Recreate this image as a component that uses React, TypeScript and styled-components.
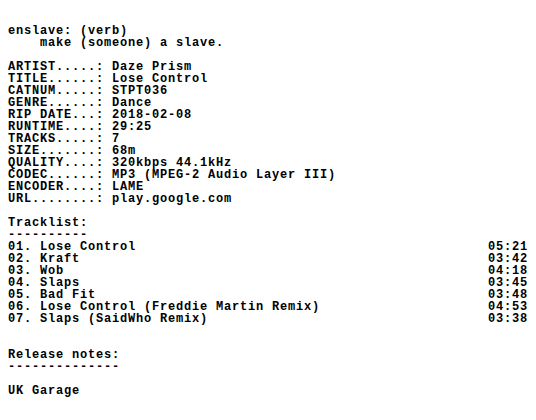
import React from "react";
import styled, { createGlobalStyle } from "styled-components";

const Global = createGlobalStyle`
  html, body { margin: 0; padding: 0; background: #ffffff; }
  body {
    color: #000000;
    font-family: "Liberation Mono", "DejaVu Sans Mono", monospace;
    font-weight: 700;
    font-size: 12px;
    letter-spacing: 0.8px;
    line-height: 12px;
  }
`;

const Page = styled.main`
  display: flex;
  flex-direction: column;
  padding: 25px 8px 0 8px;
  width: 536px;
  box-sizing: border-box;
`;

const Line = styled.div<{ $indent?: number }>`
  height: 12px;
  white-space: pre;
  padding-left: ${(p) => (p.$indent ?? 0) * 8}px;
`;

const Spacer = styled.div<{ $rows: number }>`
  height: ${(p) => p.$rows * 12}px;
`;

const InfoList = styled.dl`
  display: grid;
  grid-template-columns: 104px 1fr;
  grid-auto-rows: 12px;
  margin: 0;
`;

const Label = styled.dt`
  white-space: pre;
  margin: 0;
`;

const Value = styled.dd`
  white-space: pre;
  margin: 0;
`;

const TrackList = styled.ol`
  list-style: none;
  margin: 0;
  padding: 0;
  display: flex;
  flex-direction: column;
`;

const TrackRow = styled.li`
  display: grid;
  grid-template-columns: 480px 40px;
  height: 12px;
  white-space: pre;
`;

const info: [string, string][] = [
  ["ARTIST.....:", "Daze Prism"],
  ["TITLE......:", "Lose Control"],
  ["CATNUM.....:", "STPT036"],
  ["GENRE......:", "Dance"],
  ["RIP DATE...:", "2018-02-08"],
  ["RUNTIME....:", "29:25"],
  ["TRACKS.....:", "7"],
  ["SIZE.......:", "68m"],
  ["QUALITY....:", "320kbps 44.1kHz"],
  ["CODEC......:", "MP3 (MPEG-2 Audio Layer III)"],
  ["ENCODER....:", "LAME"],
  ["URL........:", "play.google.com"],
];

const tracks: [string, string][] = [
  ["01. Lose Control", "05:21"],
  ["02. Kraft", "03:42"],
  ["03. Wob", "04:18"],
  ["04. Slaps", "03:45"],
  ["05. Bad Fit", "03:48"],
  ["06. Lose Control (Freddie Martin Remix)", "04:53"],
  ["07. Slaps (SaidWho Remix)", "03:38"],
];

export default function App() {
  return (
    <>
      <Global />
      <Page>
        <Line>enslave: (verb)</Line>
        <Line $indent={4}>make (someone) a slave.</Line>
        <Spacer $rows={1} />
        <InfoList>
          {info.map(([k, v]) => (
            <React.Fragment key={k}>
              <Label>{k}</Label>
              <Value>{v}</Value>
            </React.Fragment>
          ))}
        </InfoList>
        <Spacer $rows={1} />
        <Line>Tracklist:</Line>
        <Line>----------</Line>
        <TrackList>
          {tracks.map(([t, d]) => (
            <TrackRow key={t}>
              <span>{t}</span>
              <span>{d}</span>
            </TrackRow>
          ))}
        </TrackList>
        <Spacer $rows={2} />
        <Line>Release notes:</Line>
        <Line>--------------</Line>
        <Spacer $rows={1} />
        <Line>UK Garage</Line>
      </Page>
    </>
  );
}
